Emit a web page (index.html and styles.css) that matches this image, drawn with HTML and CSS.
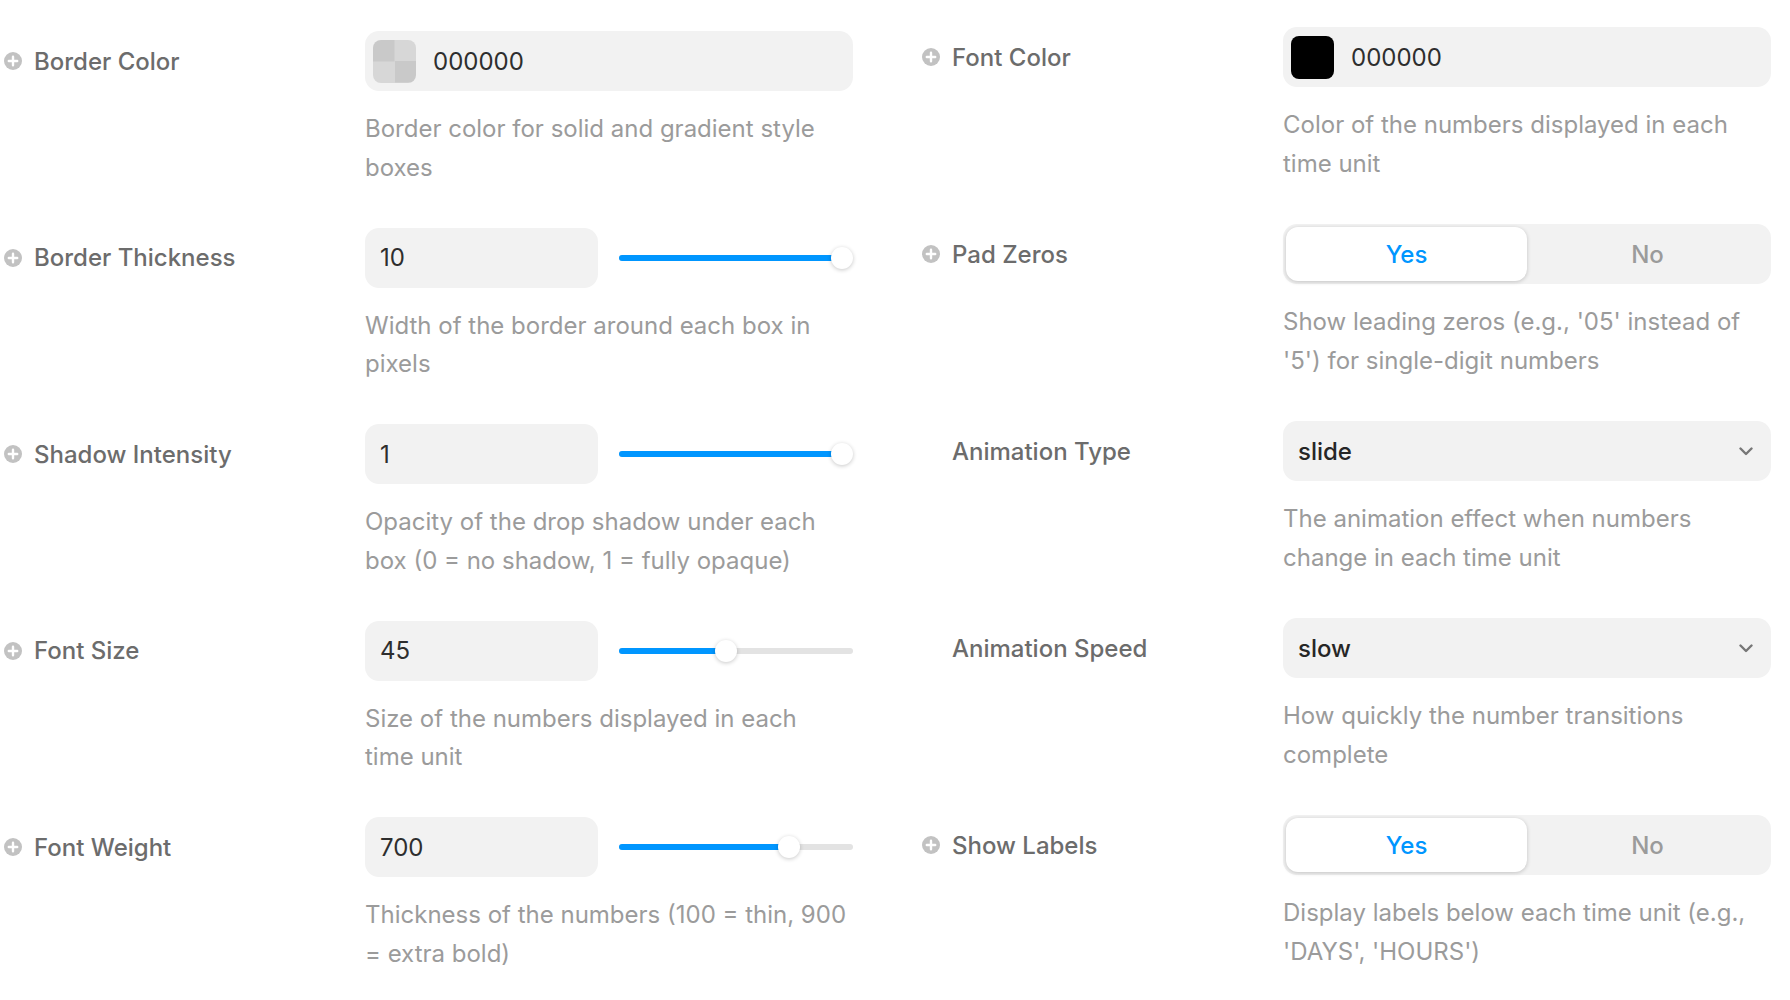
FILE: index.html
```html
<!DOCTYPE html>
<html lang="en">
<head>
    <meta charset="UTF-8">
    <meta name="viewport" content="width=device-width, initial-scale=1.0">
    <title>Countdown Settings</title>
    <link rel="stylesheet" href="styles.css">
</head>
<body>

    <div class="settings">
        <div class="col col-left">
            <div class="field">
                <div class="label"><svg class="plus" viewBox="0 0 18 18"><circle cx="9" cy="9" r="9" fill="#c2c2c2"/><path d="M9 4.8v8.4M4.8 9h8.4" stroke="#fff" stroke-width="2.4" stroke-linecap="round"/></svg>Border Color</div>
                <div class="control">
                    <div class="box color-box"><span class="swatch swatch-empty"></span><span class="hex">000000</span></div>
                </div>
                <p class="desc">Border color for solid and gradient style boxes</p>
            </div>

            <div class="field">
                <div class="label"><svg class="plus" viewBox="0 0 18 18"><circle cx="9" cy="9" r="9" fill="#c2c2c2"/><path d="M9 4.8v8.4M4.8 9h8.4" stroke="#fff" stroke-width="2.4" stroke-linecap="round"/></svg>Border Thickness</div>
                <div class="control slider-row">
                    <div class="box num-box">10</div>
                    <div class="range" style="--v:1"><div class="track"><div class="fill"></div></div><div class="thumb"></div></div>
                </div>
                <p class="desc">Width of the border around each box in pixels</p>
            </div>

            <div class="field">
                <div class="label"><svg class="plus" viewBox="0 0 18 18"><circle cx="9" cy="9" r="9" fill="#c2c2c2"/><path d="M9 4.8v8.4M4.8 9h8.4" stroke="#fff" stroke-width="2.4" stroke-linecap="round"/></svg>Shadow Intensity</div>
                <div class="control slider-row">
                    <div class="box num-box">1</div>
                    <div class="range" style="--v:1"><div class="track"><div class="fill"></div></div><div class="thumb"></div></div>
                </div>
                <p class="desc">Opacity of the drop shadow under each box (0 = no shadow, 1 = fully opaque)</p>
            </div>

            <div class="field">
                <div class="label"><svg class="plus" viewBox="0 0 18 18"><circle cx="9" cy="9" r="9" fill="#c2c2c2"/><path d="M9 4.8v8.4M4.8 9h8.4" stroke="#fff" stroke-width="2.4" stroke-linecap="round"/></svg>Font Size</div>
                <div class="control slider-row">
                    <div class="box num-box">45</div>
                    <div class="range" style="--v:0.455"><div class="track"><div class="fill"></div></div><div class="thumb"></div></div>
                </div>
                <p class="desc">Size of the numbers displayed in each time unit</p>
            </div>

            <div class="field">
                <div class="label"><svg class="plus" viewBox="0 0 18 18"><circle cx="9" cy="9" r="9" fill="#c2c2c2"/><path d="M9 4.8v8.4M4.8 9h8.4" stroke="#fff" stroke-width="2.4" stroke-linecap="round"/></svg>Font Weight</div>
                <div class="control slider-row">
                    <div class="box num-box">700</div>
                    <div class="range" style="--v:0.75"><div class="track"><div class="fill"></div></div><div class="thumb"></div></div>
                </div>
                <p class="desc">Thickness of the numbers (100 = thin, 900 = extra bold)</p>
            </div>
        </div>

        <div class="col col-right">
            <div class="field">
                <div class="label"><svg class="plus" viewBox="0 0 18 18"><circle cx="9" cy="9" r="9" fill="#c2c2c2"/><path d="M9 4.8v8.4M4.8 9h8.4" stroke="#fff" stroke-width="2.4" stroke-linecap="round"/></svg>Font Color</div>
                <div class="control">
                    <div class="box color-box"><span class="swatch swatch-black"></span><span class="hex">000000</span></div>
                </div>
                <p class="desc">Color of the numbers displayed in each time unit</p>
            </div>

            <div class="field">
                <div class="label"><svg class="plus" viewBox="0 0 18 18"><circle cx="9" cy="9" r="9" fill="#c2c2c2"/><path d="M9 4.8v8.4M4.8 9h8.4" stroke="#fff" stroke-width="2.4" stroke-linecap="round"/></svg>Pad Zeros</div>
                <div class="control">
                    <div class="toggle"><span class="opt active">Yes</span><span class="opt">No</span></div>
                </div>
                <p class="desc">Show leading zeros (e.g., '05' instead of '5') for single-digit numbers</p>
            </div>

            <div class="field">
                <div class="label"><span class="plus"></span>Animation Type</div>
                <div class="control">
                    <div class="box select-box"><span>slide</span><svg class="chev" viewBox="0 0 14 9"><path d="M1.5 1.5L7 7l5.5-5.5" fill="none" stroke="#777" stroke-width="2.4" stroke-linecap="round" stroke-linejoin="round"/></svg></div>
                </div>
                <p class="desc">The animation effect when numbers change in each time unit</p>
            </div>

            <div class="field">
                <div class="label"><span class="plus"></span>Animation Speed</div>
                <div class="control">
                    <div class="box select-box"><span>slow</span><svg class="chev" viewBox="0 0 14 9"><path d="M1.5 1.5L7 7l5.5-5.5" fill="none" stroke="#777" stroke-width="2.4" stroke-linecap="round" stroke-linejoin="round"/></svg></div>
                </div>
                <p class="desc">How quickly the number transitions complete</p>
            </div>

            <div class="field">
                <div class="label"><svg class="plus" viewBox="0 0 18 18"><circle cx="9" cy="9" r="9" fill="#c2c2c2"/><path d="M9 4.8v8.4M4.8 9h8.4" stroke="#fff" stroke-width="2.4" stroke-linecap="round"/></svg>Show Labels</div>
                <div class="control">
                    <div class="toggle"><span class="opt active">Yes</span><span class="opt">No</span></div>
                </div>
                <p class="desc">Display labels below each time unit (e.g., 'DAYS', 'HOURS')</p>
            </div>
        </div>
    </div>

</body>
</html>
```

FILE: styles.css
```css
body {
    margin: 0;
    font-family: Inter, "Liberation Sans", sans-serif;
    background-color: #ffffff;
    color: #333333;
}

.settings {
    display: grid;
    grid-template-columns: 1fr 1fr;
    column-gap: 65px;
    padding: 27px 19px 0 0;
}

.col {
    display: flex;
    flex-direction: column;
    gap: 41px;
}

.col-left {
    padding-top: 4px;
    gap: 40.5px;
}

.field {
    display: grid;
    grid-template-columns: 365px 1fr;
    grid-template-rows: 60px auto;
}

.label {
    grid-column: 1;
    grid-row: 1;
    display: flex;
    align-items: center;
    gap: 12px;
    padding-left: 4px;
    font-size: 24px;
    font-weight: 500;
    color: #6c6c6c;
}

.plus {
    width: 18px;
    height: 18px;
    flex: none;
}

.control {
    grid-column: 2;
    grid-row: 1;
    display: flex;
}

.desc {
    grid-column: 2;
    grid-row: 2;
    margin: 19px 0 0 0;
    padding-right: 5px;
    font-size: 24px;
    line-height: 38.5px;
    color: #9b9b9b;
}

.box {
    background-color: #f2f2f2;
    border-radius: 14px;
    height: 60px;
    box-sizing: border-box;
    display: flex;
    align-items: center;
    font-size: 24px;
    color: #2e2e2e;
}

.color-box {
    width: 100%;
    padding-left: 8px;
}

.swatch {
    width: 43px;
    height: 43px;
    border-radius: 8px;
    margin-right: 17px;
}

.swatch-empty {
    background:
        linear-gradient(#c9c9c9, #c9c9c9) 0 0 / 50% 50% no-repeat,
        linear-gradient(#c9c9c9, #c9c9c9) 100% 100% / 50% 50% no-repeat,
        #d7d7d7;
}

.swatch-black {
    background-color: #000000;
}

.slider-row {
    align-items: center;
    gap: 21px;
}

.num-box {
    width: 233px;
    flex: none;
    padding-left: 15px;
}

.range {
    flex: 1;
    position: relative;
    height: 22px;
    display: flex;
    align-items: center;
}

.track {
    width: 100%;
    height: 6px;
    border-radius: 3px;
    background-color: #e3e3e3;
    position: relative;
}

.fill {
    position: absolute;
    left: 0;
    top: 0;
    bottom: 0;
    width: calc(11px + var(--v) * (100% - 22px));
    border-radius: 3px;
    background-color: #0096ff;
}

.thumb {
    position: absolute;
    top: 0;
    left: calc(var(--v) * (100% - 22px));
    width: 22px;
    height: 22px;
    border-radius: 50%;
    background-color: #ffffff;
    box-shadow: 0 1px 4px rgba(0, 0, 0, 0.22);
}

.toggle {
    width: 100%;
    height: 60px;
    box-sizing: border-box;
    padding: 3px;
    background-color: #f2f2f2;
    border-radius: 14px;
    display: flex;
}

.opt {
    flex: 1;
    display: flex;
    align-items: center;
    justify-content: center;
    font-size: 24px;
    font-weight: 500;
    color: #9b9b9b;
    border-radius: 12px;
}

.opt.active {
    background-color: #ffffff;
    color: #0096ff;
    box-shadow: 0 1px 4px rgba(0, 0, 0, 0.2);
}

.select-box {
    width: 100%;
    padding: 0 16px 0 15px;
    justify-content: space-between;
    font-weight: 500;
    color: #262626;
}

.chev {
    width: 14px;
    height: 9px;
    margin-right: 2px;
}
```
